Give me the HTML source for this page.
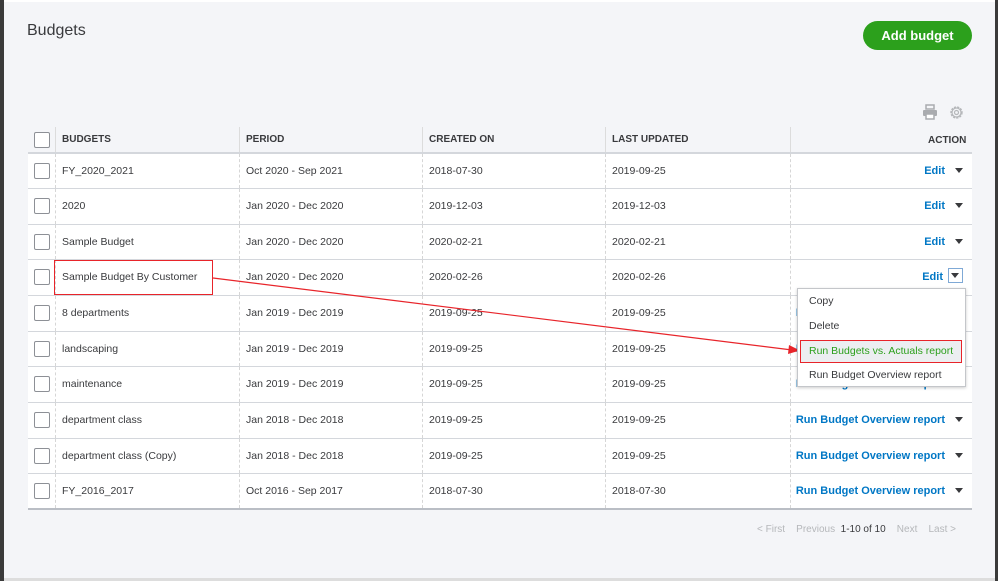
<!DOCTYPE html>
<html><head><meta charset="utf-8"><style>
*{margin:0;padding:0;box-sizing:border-box}
body{width:998px;height:581px;overflow:hidden;background:#3a3a3a;font-family:"Liberation Sans",sans-serif;position:relative}
#pg{position:absolute;left:4px;top:0;width:991px;height:578px;background:#f4f5f8;border-top:2px solid #fff}
#bot{position:absolute;left:4px;top:578px;width:991px;height:3px;background:#ddd}
.a{position:absolute;white-space:nowrap}
h1{position:absolute;left:27px;top:22px;font-weight:normal;font-size:16px;color:#393a3d}
.btn{position:absolute;left:863px;top:21px;width:109px;height:29px;border-radius:15px;background:#2ca01c;color:#fff;font-weight:bold;font-size:13px;text-align:center;line-height:29px}
.row{position:absolute;left:28px;width:944px;height:36px;background:#fff;border-bottom:1px solid #d4d7dc}
.cell{position:absolute;top:0;height:100%;font-size:10.5px;color:#393a3d;line-height:35px;padding-left:7px;white-space:nowrap}
.vl{position:absolute;top:0;bottom:0;border-left:1px dashed #d6d6d6}
.cb{position:absolute;left:6px;top:9px;width:16px;height:16px;border:1px solid #8d9096;border-radius:2px;background:#fff}
.hd{font-size:10px;font-weight:bold;color:#393a3d}
.act{position:absolute;right:9px;top:0;line-height:35px;font-size:11px;font-weight:bold;color:#0077c5;white-space:nowrap}
.tri{display:inline-block;width:0;height:0;border-left:4px solid transparent;border-right:4px solid transparent;border-top:5px solid #393a3d;margin-left:10px;vertical-align:1px}
.menu{position:absolute;left:797px;top:288px;width:169px;height:99px;background:#fff;border:1px solid #c4c6ca;box-shadow:0 1px 3px rgba(0,0,0,.2);font-size:10.5px;color:#393a3d}
.menu div{position:absolute;left:11px;white-space:nowrap}
</style></head><body>
<div id="pg"></div><div id="bot"></div>
<h1>Budgets</h1>
<div class="btn">Add budget</div>
<svg class="a" style="left:922px;top:104px" width="16" height="16" viewBox="0 0 16 16"><rect x="4" y="1" width="8" height="4" fill="none" stroke="#a9abaf" stroke-width="1.5"/><rect x="1" y="6" width="14" height="6" rx="1" fill="#a9abaf"/><rect x="4" y="10" width="8" height="5" fill="#fff" stroke="#a9abaf" stroke-width="1.5"/></svg>
<svg class="a" style="left:948px;top:104px" width="17" height="17" viewBox="0 0 17 17"><circle cx="8.5" cy="8.5" r="5.5" fill="none" stroke="#b5b7ba" stroke-width="1.4" stroke-dasharray="2.2 1.1"/><circle cx="8.5" cy="8.5" r="4.5" fill="none" stroke="#b5b7ba" stroke-width="1.2"/><circle cx="8.5" cy="8.5" r="2" fill="none" stroke="#b5b7ba" stroke-width="1.2"/></svg>

<div class="row" style="top:127px;height:27px;background:#f4f5f8;border-bottom:2px solid #d4d7dc">
<div class="cb" style="top:5px"></div>
<div class="vl" style="left:27px;border-left-style:solid;border-color:#dcdcdc"></div>
<div class="vl" style="left:211px;border-left-style:solid;border-color:#dcdcdc"></div>
<div class="vl" style="left:394px;border-left-style:solid;border-color:#dcdcdc"></div>
<div class="vl" style="left:577px;border-left-style:solid;border-color:#dcdcdc"></div>
<div class="vl" style="left:762px;border-left-style:solid;border-color:#dcdcdc"></div>
<div class="cell hd" style="left:27px;line-height:25px">BUDGETS</div>
<div class="cell hd" style="left:211px;line-height:25px">PERIOD</div>
<div class="cell hd" style="left:394px;line-height:25px">CREATED ON</div>
<div class="cell hd" style="left:577px;line-height:25px">LAST UPDATED</div>
<div class="cell hd" style="left:893px;line-height:27px">ACTION</div>
</div>

<div id="rows"></div>
<script>
var d=[["FY_2020_2021","Oct 2020 - Sep 2021","2018-07-30","2019-09-25","Edit"],
["2020","Jan 2020 - Dec 2020","2019-12-03","2019-12-03","Edit"],
["Sample Budget","Jan 2020 - Dec 2020","2020-02-21","2020-02-21","Edit"],
["Sample Budget By Customer","Jan 2020 - Dec 2020","2020-02-26","2020-02-26","Edit2"],
["8 departments","Jan 2019 - Dec 2019","2019-09-25","2019-09-25","Run Budget Overview report"],
["landscaping","Jan 2019 - Dec 2019","2019-09-25","2019-09-25","Run Budget Overview report"],
["maintenance","Jan 2019 - Dec 2019","2019-09-25","2019-09-25","Run Budget Overview report"],
["department class","Jan 2018 - Dec 2018","2019-09-25","2019-09-25","Run Budget Overview report"],
["department class (Copy)","Jan 2018 - Dec 2018","2019-09-25","2019-09-25","Run Budget Overview report"],
["FY_2016_2017","Oct 2016 - Sep 2017","2018-07-30","2018-07-30","Run Budget Overview report"]];
var tops=[154,189,225,260,296,332,367,403,439,474];
var h="";
d.forEach(function(r,i){
var t=tops[i];
var ht=(i<9?tops[i+1]-t:36);
var a=r[4]=="Edit2"?'Edit<span style="display:inline-block;width:15px;height:15px;border:1px solid #7fa9d6;margin-left:5px;vertical-align:-3px;position:relative"><span class="tri" style="position:absolute;left:2px;top:4px;margin:0"></span></span>':r[4]+'<span class="tri"></span>';
h+='<div class="row" style="top:'+t+'px;height:'+ht+'px;'+(i==9?'border-bottom:2px solid #babec5;':'')+'"><div class="cb"></div><div class="vl" style="left:27px"></div><div class="vl" style="left:211px"></div><div class="vl" style="left:394px"></div><div class="vl" style="left:577px"></div><div class="vl" style="left:762px"></div>'+
'<div class="cell" style="left:27px">'+r[0]+'</div><div class="cell" style="left:211px">'+r[1]+'</div><div class="cell" style="left:394px">'+r[2]+'</div><div class="cell" style="left:577px">'+r[3]+'</div><div class="act">'+a+'</div></div>';
});
document.getElementById("rows").innerHTML=h;
</script>

<div class="a" style="left:54px;top:260px;width:159px;height:35px;border:1.5px solid #e8242a"></div>
<svg class="a" style="left:0;top:0" width="998" height="581"><line x1="213" y1="278" x2="792" y2="350" stroke="#e8242a" stroke-width="1.2"/><polygon points="800,350.5 789,345 788,354" fill="#e8242a"/></svg>

<div class="menu">
<div style="top:6px">Copy</div>
<div style="top:31px">Delete</div>
<div style="left:2px;top:51px;width:162px;height:23px;background:#eceef1;border:1.5px solid #e8242a;color:#2ca01c;padding-left:8px;line-height:20px">Run Budgets vs. Actuals report</div>
<div style="top:80px">Run Budget Overview report</div>
</div>

<div class="a" style="left:757px;top:524px;font-size:10px;color:#b5b7ba">&lt; First &nbsp;&nbsp;&nbsp;Previous &nbsp;<span style="color:#393a3d">1-10 of 10</span> &nbsp;&nbsp;&nbsp;Next &nbsp;&nbsp;&nbsp;Last &gt;</div>
</body></html>
